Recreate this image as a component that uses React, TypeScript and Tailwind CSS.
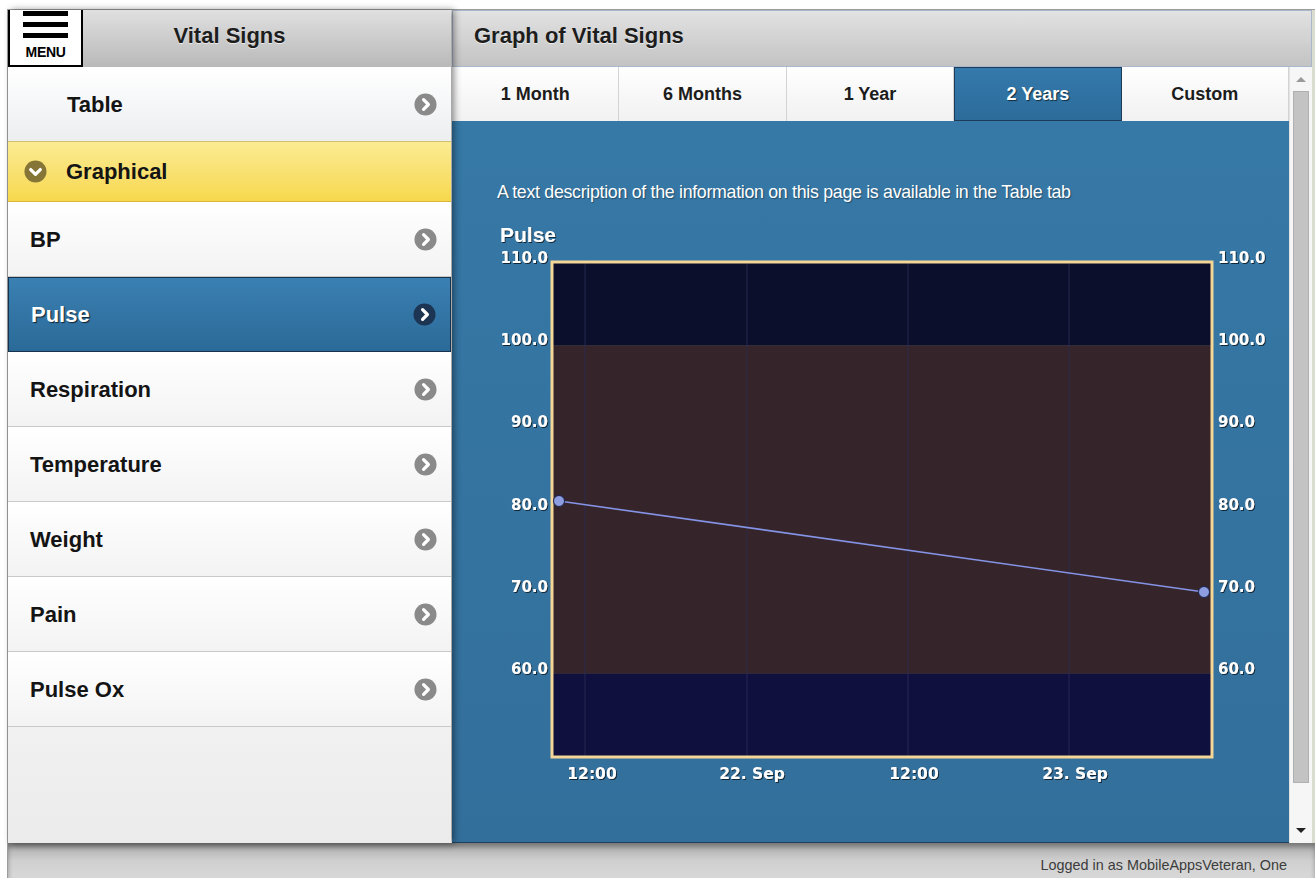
import React from 'react';

type Vital = { label: string; active?: boolean };

const vitals: Vital[] = [
  { label: 'BP' },
  { label: 'Pulse', active: true },
  { label: 'Respiration' },
  { label: 'Temperature' },
  { label: 'Weight' },
  { label: 'Pain' },
  { label: 'Pulse Ox' },
];

const ranges = ['1 Month', '6 Months', '1 Year', '2 Years', 'Custom'];
const selectedRange = '2 Years';

const ChevronCircle = ({ dark = false, down = false, olive = false }: { dark?: boolean; down?: boolean; olive?: boolean }) => {
  const fill = dark ? '#1c3552' : olive ? '#857637' : '#8a8a8a';
  return (
    <svg width="23" height="23" viewBox="0 0 24 24" className="shrink-0">
      <circle cx="12" cy="12" r="11.5" fill={fill} />
      {down ? (
        <path d="M7 10l5 5 5-5" fill="none" stroke="#fff" strokeWidth="3.4" strokeLinecap="round" strokeLinejoin="round" />
      ) : (
        <path d="M10 7l5 5-5 5" fill="none" stroke="#fff" strokeWidth="3.4" strokeLinecap="round" strokeLinejoin="round" />
      )}
    </svg>
  );
};

const MenuButton = () => (
  <button className="w-[75px] h-[57px] bg-white border-2 border-black border-t-0 flex flex-col items-center pt-[1px]">
    <span className="block w-[45px] h-[5px] bg-black" />
    <span className="block w-[45px] h-[5px] bg-black mt-[6px]" />
    <span className="block w-[45px] h-[5px] bg-black mt-[6px]" />
    <span className="text-[14px] font-bold text-black leading-none mt-[7px] tracking-tight">MENU</span>
  </button>
);

// y position of a pulse value inside the plot
const yOf = (v: number) => 61 + (110 - v) * 8.217;

const PulseChart = () => {
  const ticks = [110, 100, 90, 80, 70, 60];
  const gridX = [133, 295, 456, 617];
  const xLabels = [
    { x: 140, t: '12:00' },
    { x: 300, t: '22. Sep' },
    { x: 462, t: '12:00' },
    { x: 623, t: '23. Sep' },
  ];
  const p1 = { x: 107, y: 299 };
  const p2 = { x: 752, y: 390 };
  const labelStyle = { fontFamily: '"DejaVu Sans", Verdana, sans-serif' };
  return (
    <svg width="837" height="600" viewBox="0 0 837 600" className="block">
      <defs>
        <filter id="shadow" x="-20%" y="-40%" width="140%" height="180%">
          <feDropShadow dx="1" dy="1" stdDeviation="0.6" floodColor="#0a1a2a" floodOpacity="0.9" />
        </filter>
      </defs>
      <text x="48" y="40" fill="#fff" fontSize="21" fontWeight="bold" fontFamily='"Liberation Sans", Arial, sans-serif' filter="url(#shadow)">
        Pulse
      </text>

      {/* bands: above range, normal range, below range */}
      <rect x="101" y="61" width="658" height={yOf(100) - 61} fill="#0b0f2c" />
      <rect x="101" y={yOf(100)} width="658" height={yOf(60) - yOf(100)} fill="#35242a" />
      <rect x="101" y={yOf(60)} width="658" height={554 - yOf(60)} fill="#10103f" />
      {gridX.map((x) => (
        <line key={x} x1={x} y1="61" x2={x} y2="554" stroke="#2a2f55" strokeWidth="1" opacity="0.8" />
      ))}
      <rect x="100" y="60" width="660" height="495" fill="none" stroke="#f4d696" strokeWidth="3" />

      {ticks.map((v) => (
        <g key={v} style={labelStyle} fontSize="15" fontWeight="bold" fill="#fff" filter="url(#shadow)">
          <text x="96" y={yOf(v)} textAnchor="end">
            {v.toFixed(1)}
          </text>
          <text x="766" y={yOf(v)}>{v.toFixed(1)}</text>
        </g>
      ))}
      {xLabels.map((l, i) => (
        <text key={i} x={l.x} y="577" textAnchor="middle" fontSize="15.5" fontWeight="bold" fill="#fff" style={labelStyle} filter="url(#shadow)">
          {l.t}
        </text>
      ))}

      <line x1={p1.x} y1={p1.y} x2={p2.x} y2={p2.y} stroke="#8593e6" strokeWidth="1.6" />
      <circle cx={p1.x} cy={p1.y} r="5.5" fill="#8d9de0" stroke="#1b2350" strokeWidth="1" />
      <circle cx={p2.x} cy={p2.y} r="5.5" fill="#8d9de0" stroke="#1b2350" strokeWidth="1" />
    </svg>
  );
};

export default function App() {
  return (
    <div className="w-[1315px] h-[878px] overflow-hidden bg-white pt-[9px] pl-[7px] font-['Liberation_Sans',Arial,sans-serif]">
      <div className="h-full flex flex-col border-l border-t border-[#9c9c9c]">
        <div className="flex flex-1 min-h-0">
          {/* navigation column */}
          <aside className="w-[443px] shrink-0 flex flex-col bg-[#eeeeee] relative z-10 shadow-[3px_0_7px_rgba(0,0,0,0.45)]">
            <header className="h-[57px] grid grid-cols-[75px_1fr_75px] items-center bg-gradient-to-b from-[#e0e0e0] to-[#b9b9b9]">
              <MenuButton />
              <h1 className="text-center text-[22px] font-bold text-[#1d1d1d] pb-[6px] [text-shadow:0_1px_0_rgba(255,255,255,0.6)]">Vital Signs</h1>
              <span />
            </header>

            <div className="h-[75px] flex items-center justify-between pl-[59px] pr-[14px] bg-gradient-to-b from-white to-[#eceef0] border-b border-[#cdbf6e]">
              <span className="text-[22px] font-bold text-[#141414]">Table</span>
              <ChevronCircle />
            </div>

            <div className="h-[60px] flex items-center gap-[19px] pl-[16px] bg-gradient-to-b from-[#fbeb92] to-[#f7d84b] border-b border-[#d7b73c]">
              <ChevronCircle down olive />
              <span className="text-[22px] font-bold text-[#141414]">Graphical</span>
            </div>

            {vitals.map((v) =>
              v.active ? (
                <div
                  key={v.label}
                  className="h-[75px] flex items-center justify-between pl-[22px] pr-[14px] bg-gradient-to-b from-[#3a80b2] to-[#2b6a98] border border-[#16324d]"
                >
                  <span className="text-[22px] font-bold text-white [text-shadow:1px_1px_1px_rgba(0,0,0,0.7)]">{v.label}</span>
                  <ChevronCircle dark />
                </div>
              ) : (
                <div
                  key={v.label}
                  className="h-[75px] flex items-center justify-between pl-[22px] pr-[14px] bg-gradient-to-b from-white to-[#f3f3f3] border-b border-[#c9c9c9] last:border-b-0"
                >
                  <span className="text-[22px] font-bold text-[#141414]">{v.label}</span>
                  <ChevronCircle />
                </div>
              )
            )}
            <div className="flex-1 bg-gradient-to-b from-[#f1f1f1] to-[#ebebeb]" />
          </aside>

          {/* graph column */}
          <section className="w-[860px] shrink-0 flex flex-col ml-[1px]">
            <header className="h-[57px] flex items-center pl-[21px] bg-gradient-to-b from-[#e2e2e2] to-[#c3c3c3] border border-[#a9b6cc]">
              <h2 className="text-[22px] font-bold text-[#1d1d1d] pb-[6px] [text-shadow:0_1px_0_rgba(255,255,255,0.6)]">Graph of Vital Signs</h2>
            </header>
            <div className="flex flex-1 min-h-0">
              <div className="w-[837px] flex flex-col">
                <nav className="h-[54px] grid grid-cols-5">
                  {ranges.map((r) =>
                    r === selectedRange ? (
                      <button
                        key={r}
                        className="flex items-center justify-center bg-gradient-to-b from-[#3479ab] to-[#2c6c9b] border border-[#1b3b58] text-[18px] font-bold text-white [text-shadow:1px_1px_1px_rgba(0,0,0,0.6)]"
                      >
                        {r}
                      </button>
                    ) : (
                      <button
                        key={r}
                        className="flex items-center justify-center bg-gradient-to-b from-white to-[#f1f1f1] border-r border-[#d3d3d3] text-[18px] font-bold text-[#1c1c1c]"
                      >
                        {r}
                      </button>
                    )
                  )}
                </nav>
                <div className="flex-1 bg-gradient-to-b from-[#3678a6] to-[#336f9b] pt-[62px] border-b border-[#1f3f5c]">
                  <p className="pl-[45px] text-[17.8px] leading-[19px] text-white tracking-[-0.3px] [text-shadow:1px_1px_1px_rgba(0,0,0,0.35)]">
                    A text description of the information on this page is available in the Table tab
                  </p>
                  <PulseChart />
                </div>
              </div>

              {/* scrollbar */}
              <div className="w-[23px] bg-[#f6f6f6] flex flex-col items-center border-l border-[#e2e2e2]">
                <div className="h-[24px] flex items-center justify-center">
                  <span className="w-0 h-0 border-l-[5px] border-r-[5px] border-b-[5px] border-l-transparent border-r-transparent border-b-[#9a9a9a]" />
                </div>
                <div className="w-[16px] h-[692px] bg-[#c3c3c3] border border-[#b0b0b0]" />
                <div className="flex-1 flex items-end justify-center pb-[10px]">
                  <span className="w-0 h-0 border-l-[5px] border-r-[5px] border-t-[5px] border-l-transparent border-r-transparent border-t-[#222]" />
                </div>
              </div>
            </div>
          </section>
          <div className="flex-1 bg-[#d9ddd0]" />
        </div>

        <footer className="h-[35px] shrink-0 flex items-center justify-end pr-[28px] bg-gradient-to-b from-[#a9a9a9] via-[#cfcfcf] to-[#d8d8d8] shadow-[inset_0_4px_5px_rgba(0,0,0,0.3)]">
          <span className="text-[14.4px] text-[#3c3c3c] pt-[10px]">Logged in as MobileAppsVeteran, One</span>
        </footer>
      </div>
    </div>
  );
}
